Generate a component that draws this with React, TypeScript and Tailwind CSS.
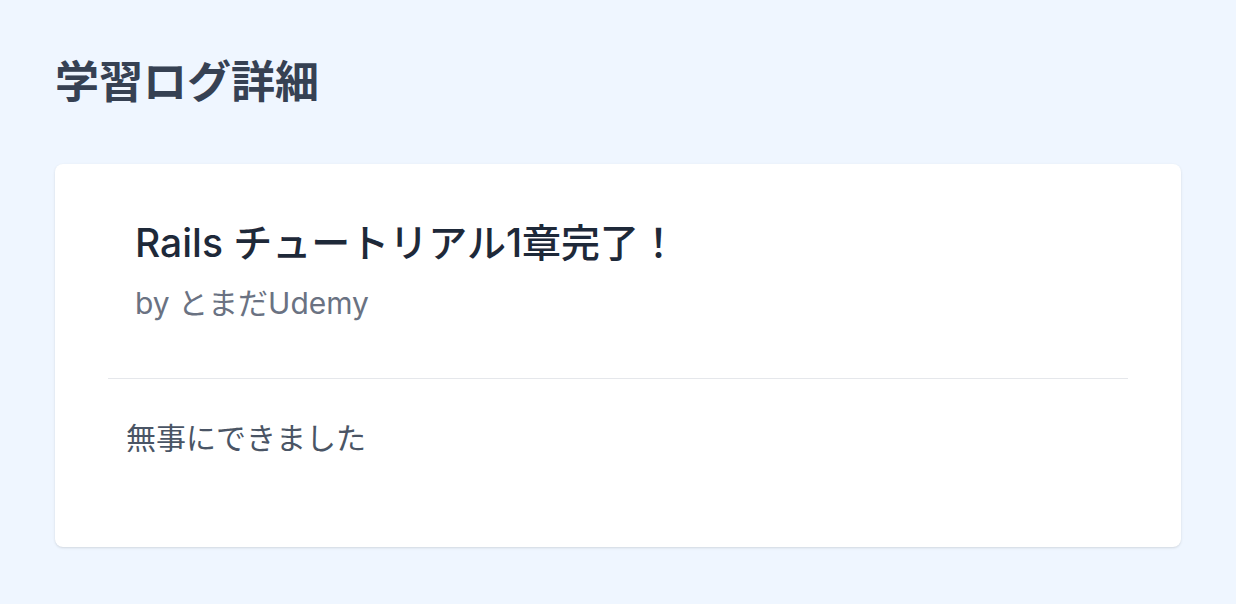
export default function App() {
  const font = { fontFamily: 'Inter, "Noto Sans CJK JP", sans-serif' }
  return (
    <div className="min-h-screen bg-[#eff6ff] px-[55px] pt-[49px] pb-10" style={font}>
      <h1 className="text-[44px] leading-[66px] font-bold text-gray-700">学習ログ詳細</h1>

      <div className="mt-[49px] rounded-lg bg-white shadow">
        <div className="px-[80px] pt-[50px] pb-[52px]">
          <h2 className="text-[39px] leading-[57px] font-medium text-gray-800">Rails チュートリアル1章完了！</h2>
          <p className="mt-[10px] text-[30px] leading-[45px] text-gray-500">by とまだUdemy</p>
        </div>
        <div className="mx-[53px] border-t border-gray-200" />
        <div className="px-[71px] pt-[37px] pb-[86px]">
          <p className="text-[30px] leading-[45px] text-gray-600">無事にできました</p>
        </div>
      </div>
    </div>
  )
}
